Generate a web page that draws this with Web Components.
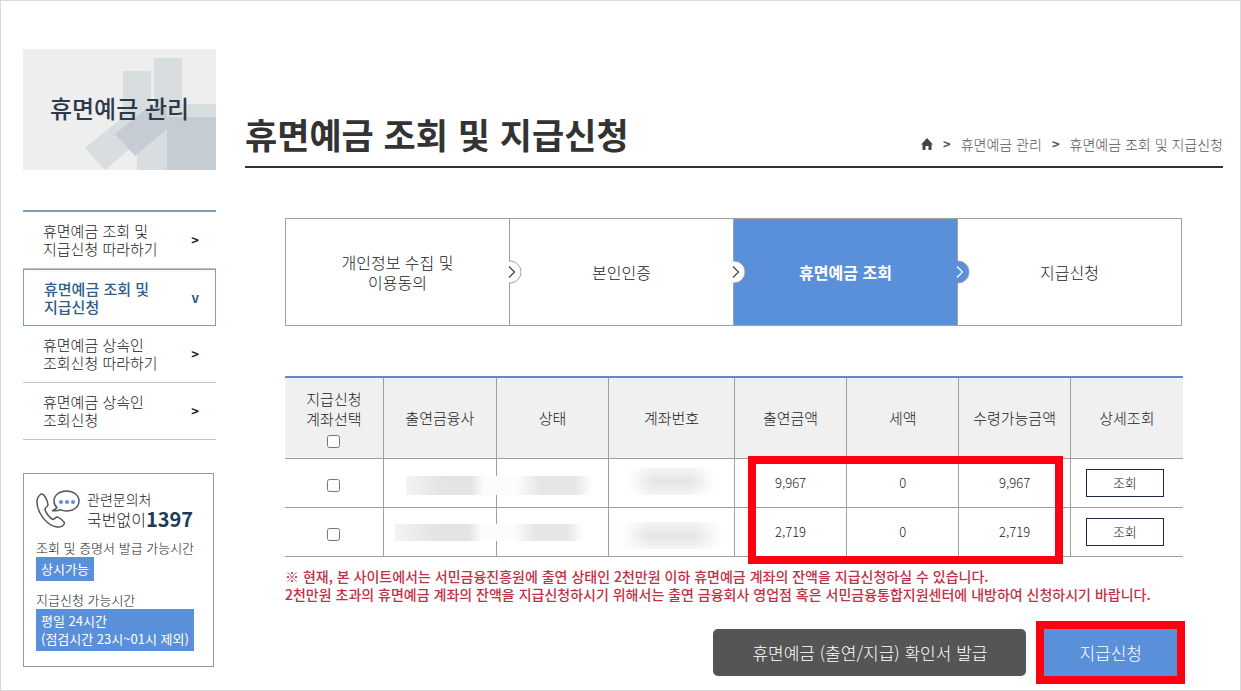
<!DOCTYPE html>
<html lang="ko">
<head>
<meta charset="utf-8">
<meta name="viewport" content="width=device-width, initial-scale=1">
<title>휴면예금 조회 및 지급신청</title>
<style>
body{
    margin: 0;
    background: #fff;
    color: #222;
    font-family: "Noto Sans CJK KR", "Noto Sans", sans-serif;
    font-size: 15px;
    font-weight: 300;
}
</style>
</head>
<body>
<dormant-page>
    <side-banner slot="side">휴면예금 관리</side-banner>
    <side-menu slot="side">
        <menu-item>휴면예금 조회 및<br>지급신청 따라하기</menu-item>
        <menu-item active>휴면예금 조회 및<br>지급신청</menu-item>
        <menu-item>휴면예금 상속인<br>조회신청 따라하기</menu-item>
        <menu-item>휴면예금 상속인<br>조회신청</menu-item>
    </side-menu>
    <contact-box slot="side"></contact-box>

    <page-heading name="휴면예금 조회 및 지급신청" parent="휴면예금 관리"></page-heading>
    <step-bar>
        <step-item>개인정보 수집 및<br>이용동의</step-item>
        <step-item>본인인증</step-item>
        <step-item active>휴면예금 조회</step-item>
        <step-item last>지급신청</step-item>
    </step-bar>
    <account-table></account-table>
    <notice-text>※ 현재, 본 사이트에서는 서민금융진흥원에 출연 상태인 2천만원 이하 휴면예금 계좌의 잔액을 지급신청하실 수 있습니다.<br>2천만원 초과의 휴면예금 계좌의 잔액을 지급신청하시기 위해서는 출연 금융회사 영업점 혹은 서민금융통합지원센터에 내방하여 신청하시기 바랍니다.</notice-text>
    <action-bar></action-bar>
</dormant-page>

<script>
function define(name, html, setup) {
    const template = document.createElement('template');
    template.innerHTML = html;

    window.customElements.define(name, class extends HTMLElement {
        constructor() {
            super();
            this.attachShadow({mode: 'open'});
            this.shadowRoot.appendChild(template.content.cloneNode(true));
            if (setup) setup(this, this.shadowRoot);
        }
    });
}

define('dormant-page', `
<style>
:host{
    display: grid;
    grid-template-columns: 193px minmax(0, 1fr);
    column-gap: 29px;
    box-sizing: border-box;
    min-height: 100vh;
    padding: 48px 17px 6px 22px;
    border: 1px solid #d9d9d9;
}
main{
    display: flex;
    flex-direction: column;
}
</style>
<aside><slot name="side"></slot></aside>
<main><slot></slot></main>
`);

define('side-banner', `
<style>
:host{
    display: grid;
    height: 121px;
    background: #eee;
    color: #2c3a4a;
    font-size: 24px;
    font-weight: 500;
}
svg, h2{
    grid-area: 1 / 1;
}
svg{
    width: 100%;
    height: 100%;
}
h2{
    margin: 0 0 4px;
    align-self: center;
    text-align: center;
    font: inherit;
    line-height: 36px;
}
</style>
<svg viewBox="0 0 193 121" preserveAspectRatio="none" aria-hidden="true">
    <path d="M62 99 100 68V22h28v38l3-3V9h28v46h34v13h-49v53h-30V94L82 121z" fill="#d8dde0"/>
    <path d="M92 85 125 58h19v10h49v53h-49V80l-32 27z" fill="#c6ccd3"/>
</svg>
<h2><slot></slot></h2>
`);

define('side-menu', `
<style>
:host{
    display: block;
    margin-top: 40px;
    border-top: 2px solid #7a9db9;
}
</style>
<nav><slot></slot></nav>
`);

define('menu-item', `
<style>
:host{
    display: block;
}
a{
    display: flex;
    align-items: center;
    justify-content: space-between;
    box-sizing: border-box;
    height: 57px;
    padding: 0 17px 0 20px;
    border-bottom: 1px solid #c4c4c4;
    color: #222;
    text-decoration: none;
    line-height: 18px;
}
b{
    font-size: 13px;
    font-weight: 700;
}
a.active{
    padding-right: 16px;
    border: 1px solid #7a9dc0;
    color: #2f5c88;
    font-weight: 500;
}
</style>
<a href="#"><span><slot></slot></span><b></b></a>
`, (el, root) => {
    const active = el.hasAttribute('active');
    root.querySelector('a').classList.toggle('active', active);
    root.querySelector('b').textContent = active ? 'v' : '>';
});

define('contact-box', `
<style>
:host{
    display: block;
    margin: 33px 2px 0 0;
    padding: 15px 12px;
    border: 1px solid #999;
    font-size: 13px;
    line-height: 18px;
}
.top{
    display: flex;
    gap: 7px;
    margin-bottom: 10px;
    white-space: nowrap;
}
svg{
    flex: none;
    width: 44px;
    height: 40px;
}
.top div{
    font-size: 14px;
    line-height: 20px;
}
.tel{
    display: flex;
    align-items: center;
    font-size: 16px;
}
.tel b{
    color: #1c3a57;
    font-size: 20px;
    font-weight: 700;
}
p{
    margin: 0;
    white-space: nowrap;
}
.badge{
    width: fit-content;
    padding: 3px 5px;
    background: #5a90da;
    color: #fff;
    font-weight: 400;
}
.badge + p{
    margin-top: 10px;
}
</style>
<div class="top">
    <svg viewBox="0 0 44 40" fill="none" stroke="#555" stroke-width="1.5" stroke-linejoin="round" aria-hidden="true">
        <path d="M5 5C2 7 .8 10 1 14c.6 10 10 23 20 24 3 .3 6-.5 7.500-3.500 0-2-5.500-6.500-7.500-6.500-1.500 0-2 2.500-4 2.500-3-1-8-7.500-8-10.500 0-2 3-2 3-4C12 12 8 4 5 5z"/>
        <path d="M21 18.500C19 17 18 15 18 12 18 6 23.500 2 30.500 2S43 6 43 12s-5.500 10-12.500 10c-2 0-4-.3-6-1.300-2 1-5 1.300-8 1 2-.8 3.500-1.700 4.500-3.200z"/>
        <g fill="#5a90da" stroke="none"><circle cx="25" cy="13" r="2"/><circle cx="31" cy="13" r="2"/><circle cx="37" cy="13" r="2"/></g>
    </svg>
    <div>관련문의처<span class="tel">국번없이<b>1397</b></span></div>
</div>
<p>조회 및 증명서 발급 가능시간</p>
<p class="badge">상시가능</p>
<p>지급신청 가능시간</p>
<p class="badge">평일 24시간<br>(점검시간 23시~01시 제외)</p>
`);

define('page-heading', `
<style>
:host{
    display: flex;
    align-items: flex-end;
    justify-content: space-between;
    margin-top: 65px;
    padding-bottom: 12px;
    border-bottom: 2px solid #333;
}
h1{
    margin: 0;
    color: #333;
    font-size: 35px;
    font-weight: 700;
    line-height: 40px;
}
nav{
    display: flex;
    align-items: center;
    gap: 10px;
    color: #555;
    font-size: 14px;
    line-height: 20px;
}
a{
    color: inherit;
    text-decoration: none;
}
svg{
    display: block;
    width: 12px;
    height: 12px;
}
b{
    font-size: 13px;
    font-weight: 700;
}
</style>
<h1></h1>
<nav>
    <a href="#" aria-label="홈"><svg viewBox="0 0 12 12" fill="#444"><path d="M6 0 12 6.500H10.500V12H7.500V8H4.500V12H1.500V6.500H0z"/></svg></a>
    <b>&gt;</b>
    <a href="#" class="parent"></a>
    <b>&gt;</b>
    <a href="#" class="current"></a>
</nav>
`, (el, root) => {
    root.querySelector('h1').textContent = el.getAttribute('name');
    root.querySelector('.parent').textContent = el.getAttribute('parent');
    root.querySelector('.current').textContent = el.getAttribute('name');
});

define('step-bar', `
<style>
:host{
    display: flex;
    box-sizing: border-box;
    height: 108px;
    margin: 50px 41px 0 40px;
    border: 1px solid #a0a0a0;
}
</style>
<slot></slot>
`);

define('step-item', `
<style>
:host{
    display: flex;
    flex: 1 1 0;
    align-items: center;
    justify-content: center;
    position: relative;
    border-right: 1px solid #a0a0a0;
    background: #fff;
    font-size: 16px;
    line-height: 20px;
    text-align: center;
    --mark: #fff;
    --arrow: #444;
}
:host([last]){
    border-right: 0;
}
:host([active]){
    background: #5a90da;
    color: #fff;
    font-weight: 700;
    --mark: #5a90da;
    --arrow: #fff;
}
/* half circle that sits over the divider */
svg{
    position: absolute;
    z-index: 1;
    top: calc(50% - 12px);
    right: -13px;
    width: 15px;
    height: 24px;
}
:host([last]) svg{
    display: none;
}
</style>
<span><slot></slot></span>
<svg viewBox="0 0 15 24" fill="none" aria-hidden="true">
    <path d="M0 1h3a11 11 0 0 1 0 22H0z" fill="var(--mark)"/>
    <path d="M2 1h1a11 11 0 0 1 0 22H2" stroke="#a0a0a0"/>
    <path d="m2 6.500 5.500 5.500L2 17.500" stroke="var(--arrow)" stroke-width="1.200"/>
</svg>
`);

const accounts = [
    {paid: '9,967', tax: '0', total: '9,967'},
    {paid: '2,719', tax: '0', total: '2,719'}
];

define('account-table', `
<style>
:host{
    display: block;
    position: relative;
    margin: 50px 40px 0;
}
table{
    width: 100%;
    table-layout: fixed;
    border-collapse: separate;
    border-spacing: 0;
    border-top: 2px solid #5b8cc8;
    line-height: 20px;
    text-align: center;
}
th, td{
    position: relative;
    padding: 0;
    border-right: 1px solid #a0a0a0;
    border-bottom: 1px solid #a0a0a0;
}
th:last-child, td:last-child{
    border-right: 0;
}
th{
    height: 80px;
    background: #f0f0f0;
    font-weight: 300;
}
td{
    height: 48px;
    font-size: 13px;
}
input{
    display: block;
    width: 13px;
    height: 13px;
    margin: 4px auto 0;
}
th input{
    margin: 6px auto 0;
}
button{
    box-sizing: border-box;
    width: 78px;
    height: 28px;
    padding: 0;
    border: 1px solid #1c2a48;
    background: #fff;
    color: #222;
    font: inherit;
    margin-right: 4px;
}
/* masked account details */
.mask{
    position: absolute;
    z-index: 1;
    top: 17px;
    height: 19px;
    left: 20%;
    right: -1px;
    background: linear-gradient(90deg, #f3f3f2, #e4e4e3 40%, #e4e4e3 72%, #fcfcfc 85%);
}
.state{
    left: 0;
    right: 14%;
    background: linear-gradient(90deg, #fcfcfc 20%, #e6e6e6 45%, #e6e6e6 80%, #fff);
}
.number{
    top: 9px;
    height: 27px;
    left: 11%;
    right: 11%;
    background:
        linear-gradient(rgba(255, 255, 255, .6), transparent 50%, rgba(255, 255, 255, .6)),
        linear-gradient(90deg, #fff 5%, #e5e5e5 30%, #e5e5e5 70%, #fff 95%);
}
tr:last-child .mask{
    top: 16px;
    height: 17px;
    left: 10%;
}
tr:last-child .state{
    left: 0;
    right: 22%;
}
tr:last-child .number{
    top: 14px;
    height: 27px;
    left: 5%;
    right: 5%;
}
.marker{
    position: absolute;
    z-index: 2;
    top: 80px;
    bottom: -7px;
    left: 51.600%;
    right: 13.400%;
    border: 8px solid #ff0010;
    pointer-events: none;
}
</style>
<table>
    <colgroup>
        <col style="width:11%"><col style="width:12.600%"><col style="width:12.500%"><col style="width:14%">
        <col style="width:12.500%"><col style="width:12.500%"><col style="width:12.400%"><col>
    </colgroup>
    <thead>
        <tr>
            <th scope="col"><label>지급신청<br>계좌선택<input type="checkbox"></label></th>
            <th scope="col">출연금융사</th>
            <th scope="col">상태</th>
            <th scope="col">계좌번호</th>
            <th scope="col">출연금액</th>
            <th scope="col">세액</th>
            <th scope="col">수령가능금액</th>
            <th scope="col">상세조회</th>
        </tr>
    </thead>
    <tbody></tbody>
</table>
<div class="marker"></div>
`, (el, root) => {
    root.querySelector('tbody').innerHTML = accounts.map((account) => `
        <tr>
            <td><input type="checkbox" aria-label="계좌선택"></td>
            <td><div class="mask"></div></td>
            <td><div class="mask state"></div></td>
            <td><div class="mask number"></div></td>
            <td>${account.paid}</td>
            <td>${account.tax}</td>
            <td>${account.total}</td>
            <td><button type="button">조회</button></td>
        </tr>`).join('');
});

define('notice-text', `
<style>
:host{
    display: block;
    margin: 10px 40px 0;
    color: #c22f45;
    font-size: 14px;
    font-weight: 500;
    line-height: 18px;
}
</style>
<slot></slot>
`);

define('action-bar', `
<style>
:host{
    display: flex;
    justify-content: flex-end;
    gap: 18px;
    margin: 26px 46px 0 40px;
}
button{
    height: 47px;
    padding: 0 39px;
    border: 0;
    border-radius: 5px;
    background: #555;
    color: #fff;
    font: inherit;
    font-size: 17px;
}
.apply{
    padding: 0 35px;
    border-radius: 0;
    background: #5a90da;
    outline: 8px solid #ff0010;
}
</style>
<button type="button">휴면예금 (출연/지급) 확인서 발급</button>
<button type="button" class="apply">지급신청</button>
`);
</script>
</body>
</html>
